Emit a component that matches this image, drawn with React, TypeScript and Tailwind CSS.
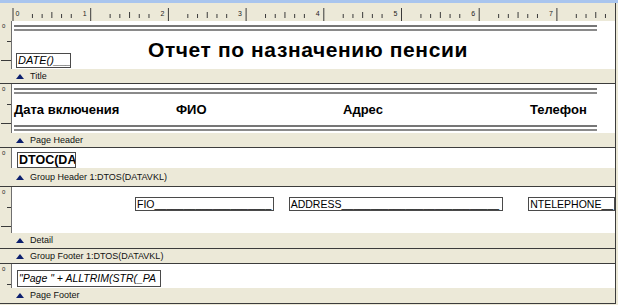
import { ReactNode } from 'react';

const INCH = 77.7;

const TopRuler = (): JSX.Element => {
  const ticks: JSX.Element[] = [];
  const nums: JSX.Element[] = [];
  for (let n = 0; n < 8; n++) {
    for (let k = 0; k < 8; k++) {
      const x = 1 + n * INCH + (k * INCH) / 8;
      if (x > 602) break;
      if (k === 1 || k === 7) continue;
      const y1 = k === 0 ? 5 : k === 4 ? 9 : 11;
      const y2 = k === 0 ? 18 : 15;
      ticks.push(<line key={`${n}-${k}`} x1={x} y1={y1} x2={x} y2={y2} stroke='#3a3a3a' strokeWidth={1} />);
    }
    nums.push(
      <text key={n} x={n === 0 ? 3.5 : n * INCH - 7} y={13} fontSize={7} fill='#222' fontFamily='Liberation Sans, sans-serif'>
        {n}
      </text>
    );
  }
  return (
    <svg width={603} height={18} className='block'>
      {ticks}
      {nums}
    </svg>
  );
};

const LeftRuler = ({ h }: { h: number }): JSX.Element => {
  const ticks: JSX.Element[] = [];
  for (let k = 2; k * 9.75 < h - 2; k += 2) {
    const y = Math.round(k * 9.75) + 0.5;
    const long = k % 4 === 0;
    ticks.push(<line key={k} x1={long ? 1 : 7} y1={y} x2={11} y2={y} stroke='#3a3a3a' strokeWidth={1} />);
  }
  return (
    <div className='w-[12px] shrink-0 bg-[#ece9d8] border-r border-[#6f6f6f]'>
      <svg width={11} height={h} className='block'>
        <text x={2} y={7} fontSize={6} fill='#222' fontFamily='Liberation Sans, sans-serif'>0</text>
        {ticks}
      </svg>
    </div>
  );
};

const BandBar = ({ label, h = 14 }: { label: string; h?: number }) => (
  <div className='border-b border-[#3c3c3c]'>
    <div className='flex items-center bg-[#ece9d8] pl-[16px]' style={{ height: h }}>
      <svg width={8} height={5} className='block'>
        <polygon points='0,5 4,0 8,5' fill='#0c1f6e' />
      </svg>
      <span className='ml-[6px] text-[9px] leading-none text-[#111]'>{label}</span>
    </div>
  </div>
);

const Band = ({ h, label, barH, children }: { h: number; label: string; barH?: number; children?: ReactNode }) => (
  <div>
    {h > 0 ? (
      <div className='flex' style={{ height: h }}>
        <LeftRuler h={h} />
        <div className='flex-1 bg-white relative overflow-hidden'>{children}</div>
      </div>
    ) : null}
    <BandBar label={label} h={barH} />
  </div>
);

const DoubleLine = () => (
  <div className='ml-[2px] w-[583px]'>
    <div className='h-[2px] bg-[#767676]' />
    <div className='h-[2px]' />
    <div className='h-[2px] bg-[#8a8a8a]' />
  </div>
);

const Field = ({ text, className }: { text: string; className: string }) => (
  <div className={`border border-[#4a4a4a] bg-white overflow-hidden whitespace-nowrap pl-[1px] ${className}`}>{text}</div>
);

export default function App() {
  return (
    <div className='w-[618px] h-[305px] overflow-hidden bg-[#ece9d8] font-["Liberation_Sans",Arial,sans-serif] text-black'>
      <div className='h-[3px] bg-[#a9c5ee]' />
      <div className='flex h-[18px] bg-[#ece9d8] border-r border-[#3c3c3c] w-[616px]'>
        <div className='w-[12px] shrink-0' />
        <TopRuler />
      </div>
      <div className='w-[616px] border-r border-[#3c3c3c]'>
        <Band h={48} label='Title'>
          <div className='pt-[4px]'>
            <DoubleLine />
          </div>
          <div className='flex items-start h-[38px]'>
            <Field text='DATE()___' className='ml-[4px] mt-[22px] w-[55px] h-[15px] text-[11px] leading-[13px] italic' />
            <div className='ml-[77px] mt-[8px] text-[21px] leading-[21px] font-bold tracking-[0.6px]'>Отчет по назначению пенсии</div>
          </div>
        </Band>
        <Band h={49} label='Page Header'>
          <div className='flex flex-col h-full pt-[4px] pb-[2px]'>
            <DoubleLine />
            <div className='flex flex-1 items-center pl-[2px] text-[13px] font-bold'>
              <div className='w-[162px]'>Дата включения</div>
              <div className='w-[167px]'>ФИО</div>
              <div className='w-[187px]'>Адрес</div>
              <div>Телефон</div>
            </div>
            <DoubleLine />
          </div>
        </Band>
        <Band h={20} label='Group Header 1:DTOS(DATAVKL)' barH={18}>
          <Field text='DTOC(DA' className='ml-[5px] mt-[4px] w-[59px] h-[16px] text-[12.5px] leading-[14px] font-bold' />
        </Band>
        <Band h={46} label='Detail' barH={15}>
          <div className='flex pt-[10px] text-[10.5px] leading-[12px]'>
            <Field text='FIO____________________' className='ml-[123px] w-[139px] h-[14px]' />
            <Field text='ADDRESS___________________________' className='ml-[15px] w-[215px] h-[14px]' />
            <Field text='NTELEPHONE__' className='ml-[25px] w-[87px] h-[14px]' />
          </div>
        </Band>
        <Band h={0} label='Group Footer 1:DTOS(DATAVKL)' />
        <Band h={24} label='Page Footer' barH={15}>
          <Field text={'"Page " + ALLTRIM(STR(_PA'} className='ml-[5px] mt-[6px] w-[144px] h-[17px] text-[10.5px] leading-[15px] italic' />
        </Band>
      </div>
    </div>
  );
}
